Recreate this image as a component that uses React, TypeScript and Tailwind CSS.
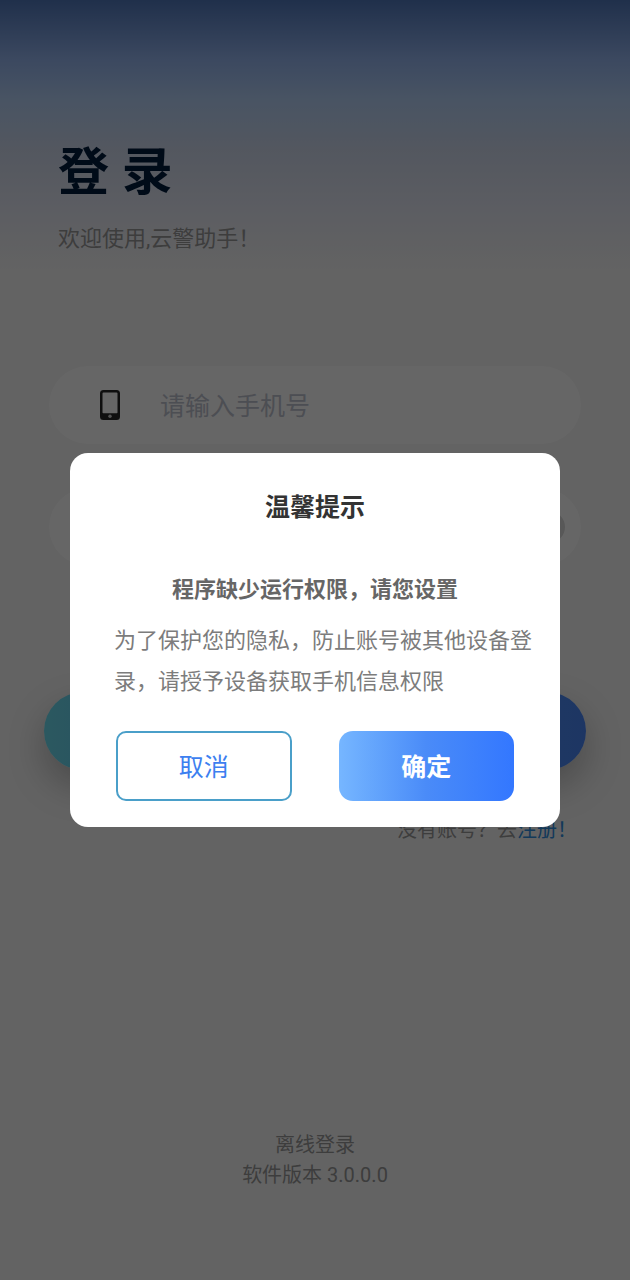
/**
 * Login screen
 * Phone / password form with the permission dialog on top
 */

import { useState } from 'react';

function PhoneIcon() {
  return (
    <svg width="20" height="30" viewBox="0 0 20 30" aria-hidden="true">
      <path
        fillRule="evenodd"
        fill="#262626"
        d="M3.5 0h13A3.5 3.5 0 0 1 20 3.5v23a3.5 3.5 0 0 1-3.5 3.5h-13A3.5 3.5 0 0 1 0 26.5v-23A3.5 3.5 0 0 1 3.5 0zM3.5 2.4a1 1 0 0 0-1 1V22.500a.8.8 0 0 0 .8.8h13.400a.8.8 0 0 0 .8-.8V3.400a1 1 0 0 0-1-1z"
      />
      <circle cx="10" cy="26.3" r="1.7" fill="#d0d0d0" />
    </svg>
  );
}

function LoginForm() {
  const [phone, setPhone] = useState('');
  const [password, setPassword] = useState('');

  return (
    <form className="mt-28" onSubmit={(e) => e.preventDefault()}>
      {/* Phone */}
      <div className="mx-[49px] flex h-[78px] items-center rounded-full bg-white pl-[51px] pr-6">
        <label htmlFor="phone" aria-label="手机号">
          <PhoneIcon />
        </label>
        <input
          id="phone"
          type="tel"
          value={phone}
          onChange={(e) => setPhone(e.target.value)}
          placeholder="请输入手机号"
          className="ml-10 min-w-0 flex-1 bg-transparent pt-1 text-[25px] text-[#333] outline-none placeholder:text-[#bec2cf]"
        />
      </div>

      {/* Password */}
      <div className="mx-[49px] mt-11 flex h-[78px] items-center rounded-full bg-white pl-[111px] pr-4">
        <input
          id="password"
          type="password"
          aria-label="密码"
          value={password}
          onChange={(e) => setPassword(e.target.value)}
          className="min-w-0 flex-1 bg-transparent pt-1 text-[25px] text-[#333] outline-none"
        />
        <button type="button" aria-label="显示密码" className="size-8 rounded-full bg-[#dcdcdc]" />
      </div>

      <button
        type="submit"
        aria-label="登录"
        className="mx-11 mt-[126px] block h-[78px] w-[calc(100%-88px)] rounded-full bg-linear-to-r from-[#6cdcf0] to-[#4a86f7] shadow-[0_16px_36px_rgba(0,0,0,0.25)]"
      />

      <p className="mt-[45px] pr-[53px] text-right text-[20px] leading-[30px] text-[#999]">
        没有账号？去
        <a href="#register" className="text-[#2f8ee0]">注册！</a>
      </p>
    </form>
  );
}

function PermissionDialog({ onClose }: { onClose: () => void }) {
  return (
    <div className="fixed inset-0 z-10 flex items-center bg-black/60 px-[70px]">
      <div
        role="dialog"
        aria-labelledby="dialog-title"
        className="w-full rounded-[18px] bg-white pb-[26px] pt-[37px]"
      >
        <h2 id="dialog-title" className="text-center text-[25px] font-bold leading-9 text-[#333]">
          温馨提示
        </h2>
        <p className="mt-11 text-center text-[22px] font-bold leading-10 text-[#666]">
          程序缺少运行权限，请您设置
        </p>
        <p className="mt-2.5 pl-11 pr-6 text-[22px] leading-[41px] text-[#7c7c7c]">
          为了保护您的隐私，防止账号被其他设备登录，请授予设备获取手机信息权限
        </p>
        <div className="mt-[29px] grid grid-cols-2 gap-[47px] px-[46px]">
          <button
            type="button"
            onClick={onClose}
            className="h-[70px] rounded-[10px] border-2 border-[#4a9fc9] pt-1 text-[25px] text-[#3d7ff0]"
          >
            取消
          </button>
          <button
            type="button"
            onClick={onClose}
            className="h-[70px] rounded-[14px] bg-linear-to-r from-[#76b6ff] via-[#4a8bf8] to-[#3377ff] pt-1 text-[25px] font-bold text-white"
          >
            确定
          </button>
        </div>
      </div>
    </div>
  );
}

export default function App() {
  const [open, setOpen] = useState(true);

  return (
    <div className="flex min-h-screen flex-col bg-[#f7f7f7] bg-[linear-gradient(#5078bb_0px,#96b6f0_60px,#b6d2f8_100px,#d0daee_150px,#e6e9f5_210px,#f7f7f7_270px)] bg-no-repeat font-[Roboto,'Noto_Sans_CJK_SC',sans-serif]">
      <header className="px-[58px] pt-[138px]">
        <h1 className="text-[51px] font-bold leading-[70px] text-[#001c3c]">登 录</h1>
        <p className="mt-4 text-[22px] leading-[30px] text-[#999]">欢迎使用,云警助手！</p>
      </header>

      <LoginForm />

      {/* Footer */}
      <footer className="mt-auto pb-[90px] text-center text-[20px] leading-[30px] text-[#999]">
        <a href="#offline">离线登录</a>
        <p>软件版本 3.0.0.0</p>
      </footer>

      {open && <PermissionDialog onClose={() => setOpen(false)} />}
    </div>
  );
}
